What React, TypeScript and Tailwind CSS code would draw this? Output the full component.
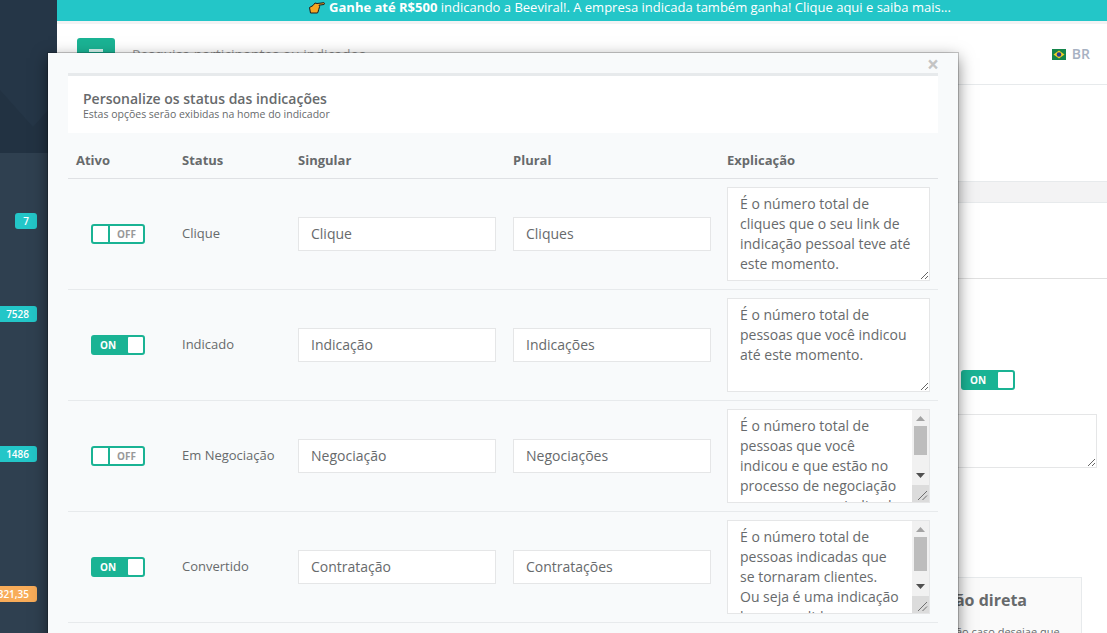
import React from "react";

const rows = [
  {
    on: false,
    status: "Clique",
    singular: "Clique",
    plural: "Cliques",
    text: "É o número total de cliques que o seu link de indicação pessoal teve até este momento.",
  },
  {
    on: true,
    status: "Indicado",
    singular: "Indicação",
    plural: "Indicações",
    text: "É o número total de pessoas que você indicou até este momento.",
  },
  {
    on: false,
    status: "Em Negociação",
    singular: "Negociação",
    plural: "Negociações",
    text: "É o número total de pessoas que você indicou e que estão no processo de negociação com a empresa indicada para se tornarem clientes.",
    thumb: "h-[29px]",
  },
  {
    on: true,
    status: "Convertido",
    singular: "Contratação",
    plural: "Contratações",
    text: "É o número total de pessoas indicadas que se tornaram clientes. Ou seja é uma indicação bem sucedida que gerou uma contratação para a empresa.",
    thumb: "h-[34px]",
  },
];

function Toggle({ on }: { on: boolean }) {
  if (on) {
    return (
      <div className="flex h-5 w-[54px] items-center justify-between rounded-[3px] border-2 border-[#1ab394] bg-[#1ab394]">
        <span className="pl-[7px] text-[10px] leading-none font-bold text-white">ON</span>
        <span className="h-4 w-[15px] rounded-[1px] bg-white" />
      </div>
    );
  }
  return (
    <div className="flex h-5 w-[54px] items-center rounded-[3px] border-2 border-[#1ab394] bg-white">
      <span className="box-content h-4 w-[15px] border-r-2 border-[#1ab394]" />
      <span className="pl-[7px] text-[10px] leading-none font-bold text-[#999]">OFF</span>
    </div>
  );
}

function PointingHand() {
  return (
    <svg width="16" height="12" viewBox="0 0 16 12" className="mr-1 inline-block align-[-2px]">
      <path
        d="M.5 5.500 4 3.500l2-2.500 2 .5 7-.8c.8.4.8 1.400 0 1.800L10 3.200l.6 1.300-.4 1.500-.5 1.500-.7 2.500-.5 1H1.500z"
        fill="#f5a623"
        stroke="#1c1c1c"
        strokeWidth="1"
      />
    </svg>
  );
}

function FakeScrollbar({ thumb }: { thumb: string }) {
  return (
    <div className="pointer-events-none absolute top-px right-px bottom-px flex w-[17px] flex-col items-center bg-[#f1f1f1]">
      <svg width="9" height="5" viewBox="0 0 9 5" className="mt-[6px] shrink-0">
        <path d="M4.500 0 9 5H0z" fill="#a3a3a3" />
      </svg>
      <div className={`mt-[5px] w-[13px] shrink-0 bg-[#bdbdbd] ${thumb}`} />
      <svg width="9" height="5" viewBox="0 0 9 5" className="absolute top-[63px]">
        <path d="M0 0h9L4.500 5z" fill="#505050" />
      </svg>
      <div className="absolute right-0 bottom-0 h-[17px] w-[17px] bg-[#dcdcdc]">
        <svg width="17" height="17" viewBox="0 0 17 17">
          <path d="M6 15 15 6M10.500 15 15 10.500" stroke="#6f6f6f" strokeWidth="1" />
        </svg>
      </div>
    </div>
  );
}

function Sidebar() {
  return (
    <aside className="flex w-[57px] shrink-0 flex-col bg-[#2f4050]">
      <div className="h-[153px] shrink-0 bg-[#253647]">
        <svg width="57" height="153" viewBox="0 0 57 153">
          <path d="M0 90 33 127 57 100V153H0z" fill="#223242" />
        </svg>
      </div>
      <div className="flex flex-col items-end pr-5 text-[10px] leading-4 font-semibold text-white">
        <span className="mt-[60px] w-[22px] rounded-[3px] bg-[#23c6c8] text-center">7</span>
        <span className="mt-[77px] w-[37px] rounded-r-[3px] bg-[#23c6c8] pr-2 text-right">7528</span>
        <span className="mt-[124px] w-[37px] rounded-r-[3px] bg-[#23c6c8] pr-2 text-right">1486</span>
        <span className="mt-[124px] flex w-[37px] justify-end overflow-hidden rounded-r-[3px] bg-[#f8ac59] pr-2 whitespace-nowrap">
          321,35
        </span>
      </div>
    </aside>
  );
}

function Page() {
  return (
    <main className="flex min-w-0 flex-1 flex-col bg-white">
      <div className="h-[21px] shrink-0 bg-[#23c6c8] pl-[96px] text-center text-[13px] leading-[14px] text-white">
        <PointingHand />
        <b>Ganhe até R$500</b> indicando a Beeviral!. A empresa indicada também ganha! Clique aqui e saiba mais...
      </div>
      <div className="h-[3px] shrink-0 bg-[#f3f3f4]" />
      <header className="flex h-[61px] shrink-0 items-start border-b border-[#e7eaec] pt-[14px] pl-5">
        <div className="flex h-[34px] w-[38px] items-center justify-center rounded-[3px] bg-[#1ab394]">
          <div className="h-[12px] w-[14px] border-y-[3px] border-white/80" />
        </div>
        <span className="ml-[17px] pt-[7px] text-[14px] leading-5 text-[#999]">
          Pesquisa participantes ou indicados
        </span>
        <span className="ml-auto flex items-center pt-[6px] pr-[17px] text-[14px] leading-5 font-semibold text-[#a7b1c2]">
          <svg width="14" height="11" viewBox="0 0 14 11" className="mr-[6px]">
            <rect width="14" height="11" fill="#14854a" />
            <path d="M7 1.500 12.500 5.500 7 9.500 1.500 5.500z" fill="#f2cf23" />
            <circle cx="7" cy="5.500" r="2.300" fill="#2a3c8f" />
          </svg>
          BR
        </span>
      </header>
      <div className="mt-[96px] h-[22px] shrink-0 border-y border-[#e7eaec] bg-[#f3f3f4]" />
      <div className="mt-[75px] h-px shrink-0 bg-[#e0e0e0]" />
      <div className="mt-[91px] shrink-0 pl-[904px]">
        <Toggle on />
      </div>
      <textarea readOnly className="mt-6 ml-[800px] block h-[54px] w-[240px] shrink-0 border border-[#e5e6e7] outline-none" />
      <div className="mt-[109px] ml-[818px] h-[120px] w-[207px] shrink-0 border border-[#e7eaec] bg-[#fafafa] pt-[12px] pl-[22px] text-[#676a6c]">
        <h3 className="text-[16px] leading-5 font-bold whitespace-nowrap">Indicação direta</h3>
        <p className="mt-[14px] ml-[22px] text-[11px] leading-4 whitespace-nowrap">Indicação caso desejae que</p>
      </div>
    </main>
  );
}

function StatusModal() {
  return (
    <div className="absolute top-[53px] left-[48px] h-[640px] w-[910px] bg-[#f8fafb] px-5 pt-5 shadow-[0_0_0_1px_rgba(0,0,0,0.2),0_5px_15px_rgba(0,0,0,0.5)]">
      <span className="absolute top-[1px] right-[19px] text-[21px] leading-5 font-bold text-[#c4c4c4]">×</span>
      <div className="h-[60px] border-t-[3px] border-[#e7eaec] bg-white pt-[14px] pl-[15px] text-[#676a6c]">
        <h2 className="text-[14px] leading-[17px] font-semibold">Personalize os status das indicações</h2>
        <p className="text-[10.5px] leading-[14px]">Estas opções serão exibidas na home do indicador</p>
      </div>
      <table className="w-[870px] table-fixed border-collapse text-[13px] text-[#676a6c]">
        <colgroup>
          <col className="w-[106px]" />
          <col className="w-[116px]" />
          <col className="w-[215px]" />
          <col className="w-[214px]" />
          <col className="w-[219px]" />
        </colgroup>
        <thead>
          <tr className="h-[45px] border-b border-[#dfe1e4] text-left text-[13px] font-bold">
            <th className="px-2 pt-[11px]">Ativo</th>
            <th className="px-2 pt-[11px]">Status</th>
            <th className="px-2 pt-[11px]">Singular</th>
            <th className="px-2 pt-[11px]">Plural</th>
            <th className="px-2 pt-[11px]">Explicação</th>
          </tr>
        </thead>
        <tbody>
          {rows.map((row) => (
            <tr key={row.status} className="h-[111px] border-b border-[#e7eaec]">
              <td className="pl-[23px]">
                <Toggle on={row.on} />
              </td>
              <td className="px-2">{row.status}</td>
              <td className="px-2">
                <input
                  readOnly
                  value={row.singular}
                  className="h-[34px] w-[198px] border border-[#e5e6e7] bg-white px-3 text-[14px] outline-none"
                />
              </td>
              <td className="px-2">
                <input
                  readOnly
                  value={row.plural}
                  className="h-[34px] w-[198px] border border-[#e5e6e7] bg-white px-3 text-[14px] outline-none"
                />
              </td>
              <td className="px-2">
                <div className="relative h-[94px] w-[203px]">
                  <textarea
                    readOnly
                    value={row.text}
                    className={`block h-[94px] w-[203px] border border-[#e5e6e7] bg-white py-[6px] pl-3 text-[14px] leading-5 outline-none ${
                      row.thumb ? "pr-[29px]" : "pr-3"
                    }`}
                  />
                  {row.thumb && <FakeScrollbar thumb={row.thumb} />}
                </div>
              </td>
            </tr>
          ))}
        </tbody>
      </table>
    </div>
  );
}

export default function App() {
  return (
    <div className="relative flex h-[633px] w-[1107px] overflow-hidden font-['Open_Sans',sans-serif]">
      <Sidebar />
      <Page />
      <StatusModal />
    </div>
  );
}
